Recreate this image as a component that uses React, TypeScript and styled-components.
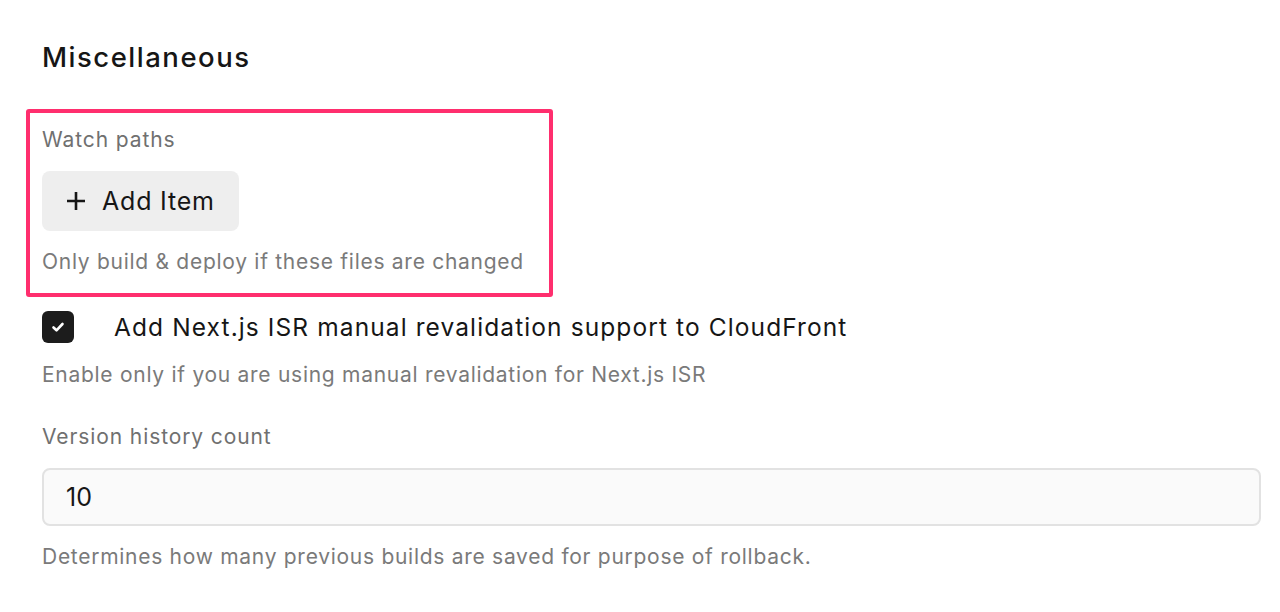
import React from 'react';
import styled, { createGlobalStyle } from 'styled-components';

const GlobalStyle = createGlobalStyle`
  html, body { margin: 0; padding: 0; background: #fff; }
  body { font-family: Inter, "Noto Sans", sans-serif; color: #151515; }
`;

// ─── Layout ────────────────────────────────────────────────────────────────
const Page = styled.div`
  padding: 38px 19px 0 42px;
  display: flex; flex-direction: column;
`;
const Heading = styled.h2`
  margin: 0 0 33px;
  font-size: 27.5px; font-weight: 500; line-height: 38px;
  color: #161616; letter-spacing: 1.5px;
`;
const Highlight = styled.div`
  box-sizing: border-box;
  margin-left: -16px;
  width: 527px;
  padding: 14px 12px 18px 12px;
  border: 4px solid #ff2e6e;
  border-radius: 3px;
  display: flex; flex-direction: column; align-items: flex-start;
`;
const Field = styled.div<{ $gap?: number }>`
  display: flex; flex-direction: column; align-items: flex-start;
  margin-top: ${p => p.$gap ?? 0}px;
`;
const Label = styled.div`
  font-size: 21px; line-height: 26px; color: #707070;
  letter-spacing: 0.9px;
`;
const Hint = styled.div`
  font-size: 21px; line-height: 26px; color: #7a7a7a;
  letter-spacing: 0.72px;
`;
const AddButton = styled.button`
  margin: 18px 0 18px;
  height: 60px; padding: 0 24px;
  display: inline-flex; align-items: center; gap: 16px;
  background: #eeeeee; border: none; border-radius: 8px;
  font-family: inherit; font-size: 25px; color: #161616;
  letter-spacing: 0.8px;
  cursor: pointer;
`;
const CheckRow = styled.label`
  display: flex; align-items: center; gap: 40px;
  margin-top: 14px;
  font-size: 24.5px; line-height: 32px; color: #161616;
  letter-spacing: 1.1px;
`;
const Box = styled.span`
  width: 32px; height: 32px; border-radius: 6px;
  background: #1c1c1c;
  display: inline-flex; align-items: center; justify-content: center;
  flex-shrink: 0;
`;
const Input = styled.input`
  margin: 18px 0 18px;
  box-sizing: border-box;
  width: 100%; height: 58px;
  padding: 0 22px;
  background: #fafafa;
  border: 2px solid #e2e2e2; border-radius: 8px;
  font-family: inherit; font-size: 25px; color: #161616;
  outline: none;
`;

export default function App() {
  return (
    <>
      <GlobalStyle />
      <Page>
        <Heading>Miscellaneous</Heading>
        <Highlight>
          <Label>Watch paths</Label>
          <AddButton type="button">
            <svg width="20" height="20" viewBox="0 0 20 20" fill="none" stroke="#161616" strokeWidth="2.6">
              <path d="M10 1v18M1 10h18" />
            </svg>
            Add Item
          </AddButton>
          <Hint>Only build &amp; deploy if these files are changed</Hint>
        </Highlight>
        <CheckRow>
          <Box>
            <svg width="16" height="16" viewBox="0 0 16 16" fill="none" stroke="#fff" strokeWidth="2.6" strokeLinecap="round" strokeLinejoin="round">
              <path d="M3.5 8.5l3 2.8L12.5 5" />
            </svg>
          </Box>
          Add Next.js ISR manual revalidation support to CloudFront
        </CheckRow>
        <Field $gap={19}>
          <Hint>Enable only if you are using manual revalidation for Next.js ISR</Hint>
        </Field>
        <Field $gap={36}>
          <Label>Version history count</Label>
          <Input defaultValue="10" readOnly />
          <Hint>Determines how many previous builds are saved for purpose of rollback.</Hint>
        </Field>
      </Page>
    </>
  );
}
